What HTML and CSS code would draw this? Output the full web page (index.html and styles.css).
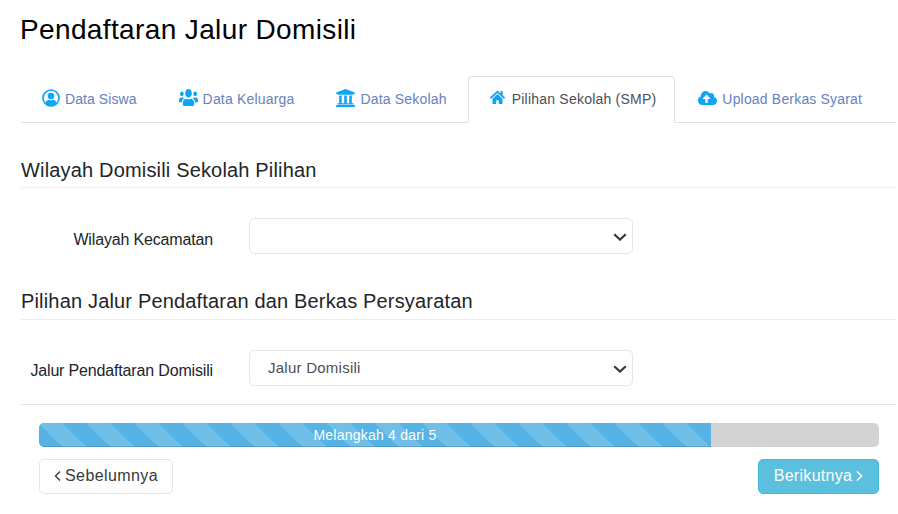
FILE: index.html
```html
<!DOCTYPE html>
<html lang="id">
<head>
<meta charset="utf-8">
<title>Pendaftaran Jalur Domisili</title>
<link rel="stylesheet" href="styles.css">
</head>
<body>
<main class="page">
  <h1 class="title">Pendaftaran Jalur Domisili</h1>
  <nav class="tabs">
    <a class="tab">
      <svg class="icon icon-user" viewBox="0 0 512 512"><circle cx="256" cy="256" r="228" fill="none" stroke="currentColor" stroke-width="48"/><circle cx="256" cy="196" r="92" fill="currentColor"/><path fill="currentColor" d="M92 400c22-62 76-96 114-96 16 10 32 15 50 15s34-5 50-15c38 0 92 34 114 96-40 44-100 76-164 76s-124-32-164-76z"/></svg>
      <span>Data Siswa</span>
    </a>
    <a class="tab">
      <svg class="icon icon-users" viewBox="0 32 640 448" preserveAspectRatio="none"><path fill="currentColor" d="M96 224c35.3 0 64-28.7 64-64s-28.7-64-64-64-64 28.7-64 64 28.7 64 64 64zm448 0c35.3 0 64-28.7 64-64s-28.7-64-64-64-64 28.7-64 64 28.7 64 64 64zm32 32h-64c-17.6 0-33.5 7.1-45.1 18.6 40.3 22.1 68.9 62 75.1 109.4h66c17.7 0 32-14.3 32-32v-32c0-35.3-28.7-64-64-64zm-256 0c61.9 0 112-50.1 112-112S381.9 32 320 32 208 82.1 208 144s50.1 112 112 112zm76.8 32h-8.3c-20.8 10-43.9 16-68.5 16s-47.6-6-68.5-16h-8.3C179.6 288 128 339.6 128 403.2V432c0 26.5 21.5 48 48 48h288c26.5 0 48-21.5 48-48v-28.8c0-63.6-51.6-115.2-115.2-115.2zm-223.7-13.4C161.5 263.1 145.6 256 128 256H64c-35.3 0-64 28.7-64 64v32c0 17.7 14.3 32 32 32h65.9c6.3-47.4 34.9-87.3 75.2-109.4z"/></svg>
      <span>Data Keluarga</span>
    </a>
    <a class="tab">
      <svg class="icon icon-bank" viewBox="16 32 480 448" preserveAspectRatio="none"><path fill="currentColor" d="M496 128v16a8 8 0 0 1-8 8h-24v12c0 6.627-5.373 12-12 12H60c-6.627 0-12-5.373-12-12v-12H24a8 8 0 0 1-8-8v-16a8 8 0 0 1 4.941-7.392l232-88a7.996 7.996 0 0 1 6.118 0l232 88A8 8 0 0 1 496 128zm-24 304H40c-13.255 0-24 10.745-24 24v16a8 8 0 0 0 8 8h464a8 8 0 0 0 8-8v-16c0-13.255-10.745-24-24-24zM96 192v192H60c-6.627 0-12 5.373-12 12v20h416v-20c0-6.627-5.373-12-12-12h-36V192h-64v192h-64V192h-64v192h-64V192H96z"/></svg>
      <span>Data Sekolah</span>
    </a>
    <a class="tab tab-active">
      <svg class="icon icon-home" viewBox="0 32 576 448" preserveAspectRatio="none"><path fill="currentColor" d="M280.37 148.26L96 300.11V464a16 16 0 0 0 16 16l112.06-.29a16 16 0 0 0 15.92-16V368a16 16 0 0 1 16-16h64a16 16 0 0 1 16 16v95.64a16 16 0 0 0 16 16.05L464 480a16 16 0 0 0 16-16V300L295.67 148.26a12.19 12.19 0 0 0-15.3 0zM571.6 251.47L488 182.56V44.05a12 12 0 0 0-12-12h-56a12 12 0 0 0-12 12v72.61L318.47 43a48 48 0 0 0-61 0L4.34 251.47a12 12 0 0 0-1.6 16.9l25.5 31A12 12 0 0 0 45.15 301l235.22-193.74a12.19 12.19 0 0 1 15.3 0L530.9 301a12 12 0 0 0 16.9-1.6l25.5-31a12 12 0 0 0-1.7-16.93z"/></svg>
      <span>Pilihan Sekolah (SMP)</span>
    </a>
    <a class="tab">
      <svg class="icon icon-cloud" viewBox="0 32 640 448" preserveAspectRatio="none"><path fill="currentColor" d="M537.6 226.6c4.1-10.7 6.4-22.4 6.4-34.6 0-53-43-96-96-96-19.7 0-38.1 6-53.3 16.2C367 64.2 315.3 32 256 32c-88.4 0-160 71.6-160 160 0 2.7.1 5.4.2 8.1C40.2 219.8 0 273.2 0 336c0 79.5 64.5 144 144 144h368c70.7 0 128-57.3 128-128 0-61.9-44-113.6-102.4-125.4zM393.4 288H328v112c0 8.8-7.2 16-16 16h-48c-8.8 0-16-7.2-16-16V288h-65.4c-14.3 0-21.4-17.2-11.3-27.3l105.4-105.4c6.2-6.2 16.4-6.2 22.6 0l105.4 105.4c10.1 10.1 2.9 27.3-11.3 27.3z"/></svg>
      <span>Upload Berkas Syarat</span>
    </a>
  </nav>

  <section class="section">
    <h2 class="section-title">Wilayah Domisili Sekolah Pilihan</h2>
    <div class="field">
      <label class="field-label" for="kec">Wilayah Kecamatan</label>
      <div class="select-wrap">
        <select class="select" id="kec"><option></option></select>
        <svg class="chevron" viewBox="0 0 14 8"><path d="M1.2 1.2L7 6.6l5.8-5.4" fill="none" stroke="#343a40" stroke-width="2.2"/></svg>
      </div>
    </div>
  </section>

  <section class="section section-second">
    <h2 class="section-title">Pilihan Jalur Pendaftaran dan Berkas Persyaratan</h2>
    <div class="field">
      <label class="field-label" for="jalur">Jalur Pendaftaran Domisili</label>
      <div class="select-wrap">
        <select class="select" id="jalur"><option>Jalur Domisili</option></select>
        <svg class="chevron" viewBox="0 0 14 8"><path d="M1.2 1.2L7 6.6l5.8-5.4" fill="none" stroke="#343a40" stroke-width="2.2"/></svg>
      </div>
    </div>
  </section>

  <footer class="footer">
    <div class="progress">
      <div class="progress-bar" style="width: 80%">Melangkah 4 dari 5</div>
    </div>
    <div class="actions">
      <button class="btn btn-prev" type="button"><svg class="caret" viewBox="0 0 7 12"><path d="M6 1.5L1.5 6 6 10.5" fill="none" stroke="currentColor" stroke-width="1.4"/></svg>Sebelumnya</button>
      <button class="btn btn-next" type="button">Berikutnya<svg class="caret caret-next" viewBox="0 0 7 12"><path d="M1 1.5L5.5 6 1 10.5" fill="none" stroke="currentColor" stroke-width="1.7"/></svg></button>
    </div>
  </footer>
</main>
</body>
</html>
```
FILE: styles.css
```css
* { box-sizing: border-box; }
html, body { margin: 0; padding: 0; background: #fff; }
body { font-family: "Liberation Sans", Arial, sans-serif; color: #212529; overflow: hidden; }
.page { width: 898px; height: 514px; padding: 0 2px 0 21px; }
.title { margin: 0 0 0 -1px; padding-top: 13px; height: 76px; font-size: 28px; font-weight: 400; line-height: 34px; color: #000; letter-spacing: .37px; }
.tabs { display: flex; height: 47px; border-bottom: 1px solid #dee2e6; }
.tab { display: flex; align-items: center; height: 47px; padding: 0 20px 1px; font-size: 14px; letter-spacing: .18px; color: #6482c2; border: 1px solid transparent; border-radius: 4px 4px 0 0; white-space: nowrap; }
.tab:first-child { letter-spacing: .08px; }
.tab-active { background: #fff; color: #495057; border-color: #dee2e6 #dee2e6 #fff; padding-right: 18px; letter-spacing: .22px; }
.icon { display: block; flex: none; color: #0ea5f4; margin-right: 5px; margin-top: -3px; }
.icon-user { width: 18px; height: 18px; }
.icon-users { width: 19px; height: 17px; }
.icon-bank { width: 19px; height: 18px; }
.icon-home { width: 15px; height: 13px; margin-left: 1px; margin-right: 7px; }
.icon-cloud { width: 19px; height: 14px; margin-left: 2px; }
.section { padding-top: 33px; }
.section-title { margin: 0; height: 32px; font-size: 20px; line-height: 28px; font-weight: 400; color: #212529; letter-spacing: .17px; border-bottom: 1px solid #eee; }
.section-second .section-title { height: 33px; }
.field { display: flex; align-items: center; margin-top: 30px; }
.field-label { width: 192px; padding-top: 8px; text-align: right; font-size: 16px; letter-spacing: -.16px; color: #212529; }
.section-second .field-label { padding-top: 6px; }
.select-wrap { position: relative; width: 384px; margin-left: 36px; }
.select { display: block; width: 100%; height: 36px; padding: 0 18px 2px; appearance: none; -webkit-appearance: none; background: #fff; border: 1px solid #e3e6ea; border-radius: 5px; font: 15px "Liberation Sans", Arial, sans-serif; letter-spacing: .25px; color: #495057; outline: none; }
.chevron { position: absolute; right: 6px; top: 15px; width: 14px; height: 8px; }
.footer { margin-top: 18px; padding: 18px 17px 0 18px; border-top: 1px solid #e5e5e5; }
.progress { height: 24px; background: #d3d3d3; border-radius: 5px; overflow: hidden; }
.progress-bar { height: 24px; line-height: 24px; text-align: center; font-size: 14px; letter-spacing: .22px; color: #fff; background-color: #55b3e5; background-image: linear-gradient(45deg, rgba(255,255,255,.16) 25%, transparent 25%, transparent 50%, rgba(255,255,255,.16) 50%, rgba(255,255,255,.16) 75%, transparent 75%, transparent); background-size: 48px 48px; box-shadow: inset 0 -1px 0 rgba(0,0,0,.15); }
.actions { display: flex; justify-content: space-between; margin-top: 12px; }
.btn { display: flex; align-items: center; justify-content: center; height: 35px; padding: 0 10px 1px; font: 16px "Liberation Sans", Arial, sans-serif; border-radius: 5px; border: 1px solid; }
.btn-prev { width: 134px; background: #fff; color: #343a40; border-color: #e3e6ea; letter-spacing: .4px; }
.btn-next { width: 121px; background: #5bc0de; color: #fff; border-color: #46b8da; letter-spacing: .3px; }
.caret { width: 7px; height: 12px; margin-right: 4px; }
.caret-next { margin-right: 0; margin-left: 4px; }
```
